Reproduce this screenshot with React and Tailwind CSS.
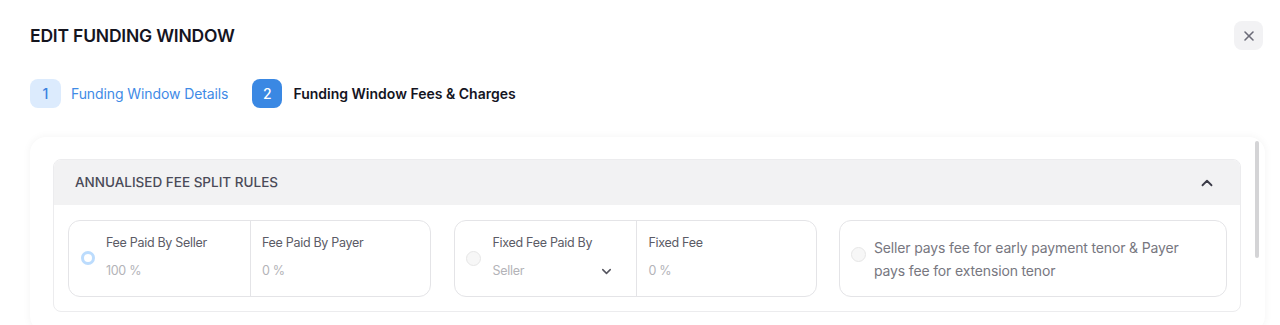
import { X, ChevronUp, ChevronDown } from 'lucide-react'

function Radio({ checked }) {
  if (checked) {
    return <span className="block w-[14px] h-[14px] rounded-full border-[3px] border-[#bcdcfd] bg-white" />
  }
  return <span className="block w-[15px] h-[15px] rounded-full border border-[#e6e6e6] bg-[#f7f7f7]" />
}

function Field({ label, value, children, className = '' }) {
  return (
    <div className={`flex flex-col ${className}`}>
      <span className="text-[12.5px] leading-[16px] tracking-[-0.3px] text-[#5b5b66]">{label}</span>
      <div className="mt-[12px] flex items-center justify-between">
        <span className="text-[12.5px] leading-[16px] tracking-[-0.3px] text-[#b3b3b8]">{value}</span>
        {children}
      </div>
    </div>
  )
}

function App() {
  return (
    <div className="w-[1280px] h-[325px] overflow-hidden bg-white" style={{ fontFamily: 'Inter, "Noto Sans", sans-serif' }}>
      {/* Header */}
      <div className="flex items-start justify-between pl-[30px] pr-[17px] pt-[21px]">
        <h1 className="mt-[5px] text-[17.5px] leading-[20px] font-semibold tracking-[-0.2px] text-[#15151f]">EDIT FUNDING WINDOW</h1>
        <button className="w-[29px] h-[29px] rounded-lg bg-[#f2f2f4] flex items-center justify-center text-[#6b6b78]">
          <X size={16} strokeWidth={2.4} />
        </button>
      </div>

      {/* Steps */}
      <div className="flex items-center pl-[30px] mt-[29px]">
        <span className="w-[31px] h-[29px] rounded-lg bg-[#dcebfd] text-[#3b82e0] text-[14px] font-medium flex items-center justify-center">1</span>
        <span className="ml-[10px] text-[14px] tracking-[-0.1px] text-[#3f8be6]">Funding Window Details</span>
        <span className="ml-[24px] w-[30px] h-[29px] rounded-lg bg-[#3a88e3] text-white text-[14px] font-medium flex items-center justify-center">2</span>
        <span className="ml-[11px] text-[14px] font-semibold text-[#15151f]">Funding Window Fees &amp; Charges</span>
      </div>

      {/* Card */}
      <div className="relative ml-[30px] mr-[15px] mt-[29px] rounded-2xl bg-white shadow-[0_0_8px_rgba(0,0,0,0.05)] pl-[23px] pr-[24px] pt-[22px] pb-[20px]">
        <div className="absolute right-[6px] top-[4px] w-[4px] h-[117px] rounded-full bg-[#d4d4d6]" />
        <div className="rounded-lg border border-[#ececee] overflow-hidden">
          <div className="h-[45px] bg-[#f2f2f3] flex items-center justify-between pl-[21px] pr-[24px]">
            <span className="text-[13.5px] font-medium text-[#4a4a58]">ANNUALISED FEE SPLIT RULES</span>
            <ChevronUp size={18} strokeWidth={2.4} className="text-[#3c3c48]" />
          </div>
          <div className="grid grid-cols-[363px_363px_388px] gap-x-[22.5px] px-[14px] pt-[15px] pb-[14px]">
            <div className="h-[77px] rounded-xl border border-[#e4e4e7] flex">
              <div className="w-[181px] flex items-start">
                <div className="w-[37px] flex justify-center pt-[30px]"><Radio checked /></div>
                <Field label="Fee Paid By Seller" value="100 %" className="pt-[14px]" />
              </div>
              <div className="flex-1 border-l border-[#e4e4e7] pl-[11px] pt-[14px]">
                <Field label="Fee Paid By Payer" value="0 %" />
              </div>
            </div>
            <div className="h-[77px] rounded-xl border border-[#e4e4e7] flex">
              <div className="w-[181px] flex items-start">
                <div className="w-[38px] flex justify-center pt-[30px]"><Radio /></div>
                <Field label="Fixed Fee Paid By" value="Seller" className="pt-[14px] flex-1 pr-[22px]">
                  <ChevronDown size={15} strokeWidth={2.4} className="text-[#55555f]" />
                </Field>
              </div>
              <div className="flex-1 border-l border-[#e4e4e7] pl-[12px] pt-[14px]">
                <Field label="Fixed Fee" value="0 %" />
              </div>
            </div>
            <div className="h-[77px] rounded-xl border border-[#e4e4e7] flex items-center pl-[11px]">
              <div className="mr-[8px] -mt-[8px]"><Radio /></div>
              <p className="text-[14px] leading-[23px] tracking-[-0.15px] text-[#77777f] pr-[20px]">
                Seller pays fee for early payment tenor &amp; Payer pays fee for extension tenor
              </p>
            </div>
          </div>
        </div>
      </div>
    </div>
  )
}

export default App
